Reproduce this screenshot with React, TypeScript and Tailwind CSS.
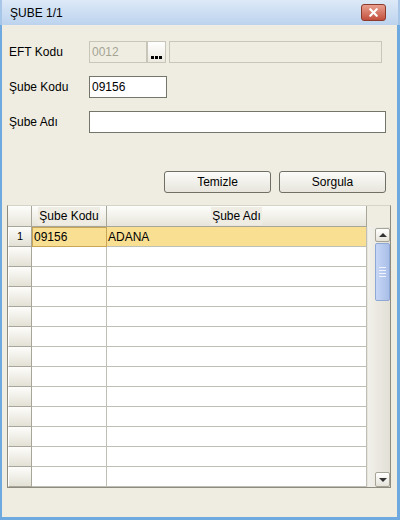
import { X } from "lucide-react";

const font = { fontFamily: '"Liberation Sans", Arial, sans-serif' };

function Field({ label, children }: { label: string; children: React.ReactNode }) {
  return (
    <div className="flex items-center h-[22px]">
      <span className="w-[87px] pl-[7px] text-[12px] text-black">{label}</span>
      {children}
    </div>
  );
}

function RowHead({ n }: { n?: string }) {
  return (
    <div className="w-[24px] h-full flex items-center justify-center border-r border-b border-[#a8a699] bg-gradient-to-b from-[#fdfdfb] to-[#e3e1d5] border-l border-l-white text-[11px]">
      {n}
    </div>
  );
}

export default function App() {
  const rows = Array.from({ length: 13 }, (_, i) => i);

  return (
    <div className="w-[400px] h-[520px] flex flex-col bg-[#6ea9df] overflow-hidden" style={font}>
      <div className="h-[25px] flex items-center justify-between pl-[8px] pr-[12px] bg-gradient-to-b from-[#dde9f7] to-[#bcd3ee] border-l-2 border-r-2 border-[#a7c6e8]">
        <span className="text-[12px] text-black">ŞUBE 1/1</span>
        <button className="w-[25px] h-[17px] rounded-[3px] border border-[#8c3a2c] bg-gradient-to-b from-[#e9a090] to-[#c24e3c] flex items-center justify-center">
          <X size={13} strokeWidth={4} color="#ffffff" />
        </button>
      </div>

      <div className="flex-1 flex flex-col bg-[#efede2] ml-[2px] mr-[3px] mb-[3px] pt-[16px]">
        <div className="flex flex-col gap-[13px]">
          <Field label="EFT Kodu">
            <div className="w-[58px] h-[22px] border border-[#c8c6b8] bg-[#efede2] text-[12px] text-[#a5a493] pl-[2px] flex items-center">0012</div>
            <button className="w-[19px] h-[22px] border border-[#c8c6b8] bg-gradient-to-b from-white to-[#ece9df] flex items-end justify-center pb-[3px] gap-[1px]">
              <span className="w-[3px] h-[3px] bg-black" />
              <span className="w-[3px] h-[3px] bg-black" />
              <span className="w-[3px] h-[3px] bg-black" />
            </button>
            <div className="ml-[3px] w-[213px] h-[22px] border border-[#c8c6b8] bg-[#efede2]" />
          </Field>
          <Field label="Şube Kodu">
            <div className="w-[78px] h-[22px] border border-[#75766a] bg-white text-[12px] pl-[2px] flex items-center">09156</div>
          </Field>
          <Field label="Şube Adı">
            <div className="w-[297px] h-[22px] border border-[#75766a] bg-white" />
          </Field>
        </div>

        <div className="flex justify-end gap-[8px] pr-[11px] mt-[38px]">
          <button className="w-[107px] h-[22px] rounded-[3px] border border-[#6f6f66] bg-gradient-to-b from-[#fbfbf8] to-[#e7e5dc] text-[12px]">Temizle</button>
          <button className="w-[107px] h-[22px] rounded-[3px] border border-[#6f6f66] bg-gradient-to-b from-[#fbfbf8] to-[#e7e5dc] text-[12px]">Sorgula</button>
        </div>

        <div className="mt-[12px] ml-[5px] w-[384px] h-[283px] border border-[#8d8b80] border-t-[#d6d4c8] flex bg-white">
          <div className="flex flex-col w-[359px]">
            <div className="h-[21px] flex text-[12px] border-b border-[#a8a699]">
              <div className="w-[24px] h-full border-r border-[#a8a699] bg-gradient-to-b from-[#fdfdfb] to-[#e7e5da]" />
              <div className="w-[75px] h-full border-r border-[#a8a699] bg-gradient-to-b from-[#fdfdfb] to-[#e7e5da] flex items-center justify-center">
                <span className="bg-[#eeece3] px-[1px]">Şube Kodu</span>
              </div>
              <div className="w-[260px] h-full border-r border-[#a8a699] bg-gradient-to-b from-[#fdfdfb] to-[#e7e5da] flex items-center justify-center">
                <span className="bg-[#eeece3] px-[1px]">Şube Adı</span>
              </div>
            </div>
            {rows.map((i) => (
              <div key={i} className="h-[20px] flex text-[12px]">
                <RowHead n={i === 0 ? "1" : undefined} />
                {i === 0 ? (
                  <>
                    <div className="w-[75px] h-full bg-[#f9df92] border border-[#c9a557] pl-[1px] flex items-center">09156</div>
                    <div className="w-[260px] h-full bg-[#f9df92] border-r border-b border-[#c0bfb5] pl-[1px] flex items-center">ADANA</div>
                  </>
                ) : (
                  <>
                    <div className="w-[75px] h-full border-r border-b border-[#c0bfb5]" />
                    <div className="w-[260px] h-full border-r border-b border-[#c0bfb5]" />
                  </>
                )}
              </div>
            ))}
          </div>
          <div className="flex-1 flex flex-col bg-[#efede2]">
            <div className="h-[21px]" />
            <div className="flex-1 flex flex-col items-end bg-gradient-to-r from-[#f1f0ea] to-[#e2e0d6] border-l border-[#e6e4db]">
              <div className="w-[15px] h-[14px] mt-[1px] border border-[#a6a497] bg-gradient-to-b from-white to-[#e5e3d9] rounded-[2px] flex items-center justify-center">
                <span className="w-0 h-0 border-l-[4px] border-r-[4px] border-b-[4px] border-l-transparent border-r-transparent border-b-[#333]" />
              </div>
              <div className="w-[15px] h-[58px] mt-[1px] rounded-[2px] border border-[#8fa7d4] bg-gradient-to-r from-[#c6d6f5] to-[#aabfe8] flex flex-col items-center justify-center gap-[2px]">
                <span className="w-[7px] h-[1px] bg-[#eef3fd]" />
                <span className="w-[7px] h-[1px] bg-[#eef3fd]" />
                <span className="w-[7px] h-[1px] bg-[#eef3fd]" />
                <span className="w-[7px] h-[1px] bg-[#eef3fd]" />
              </div>
              <div className="flex-1" />
              <div className="w-[15px] h-[15px] border border-[#a6a497] bg-gradient-to-b from-white to-[#e5e3d9] rounded-[2px] flex items-center justify-center">
                <span className="w-0 h-0 border-l-[4px] border-r-[4px] border-t-[4px] border-l-transparent border-r-transparent border-t-[#333]" />
              </div>
            </div>
          </div>
        </div>
      </div>
    </div>
  );
}
